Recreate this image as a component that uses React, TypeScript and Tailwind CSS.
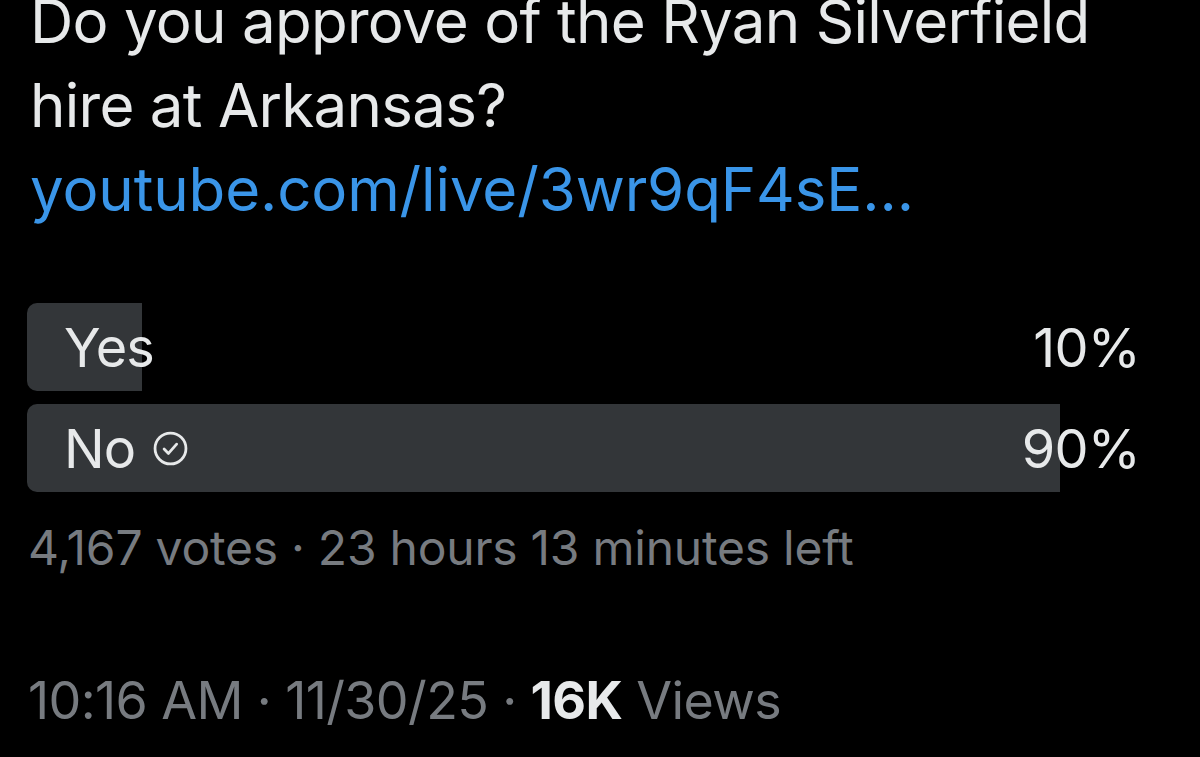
import React from 'react';

const options = [
  { label: 'Yes', percent: 10, chosen: false },
  { label: 'No', percent: 90, chosen: true },
];

function CheckCircle() {
  return (
    <svg width="35" height="35" viewBox="0 0 24 24" fill="none" className="shrink-0">
      <circle cx="12" cy="12" r="10.6" stroke="#e7e9ea" strokeWidth="1.9" />
      <path d="M7.6 12.4l3 3 5.6-6.4" stroke="#e7e9ea" strokeWidth="1.9" strokeLinecap="round" strokeLinejoin="round" />
    </svg>
  );
}

export default function App() {
  return (
    <div
      className="w-[1200px] h-[757px] overflow-hidden bg-black text-[#e7e9ea]"
      style={{ fontFamily: 'Inter, "Noto Sans", sans-serif' }}
    >
      <div className="pl-[30px] pr-[25px]">
        <div className="-mt-[21px] text-[60px] leading-[84px] tracking-[-0.012em]">
          <div>Do you approve of the Ryan Silverfield</div>
          <div>hire at Arkansas?</div>
          <div className="text-[#3a95e8] tracking-[-0.002em]">youtube.com/live/3wr9qF4sE…</div>
        </div>

        <div className="mt-[72px] -ml-[3px] flex flex-col gap-[13px]">
          {options.map(opt => (
            <div key={opt.label} className="relative h-[88px] flex items-center">
              <div
                className="absolute left-0 top-0 h-full bg-[#333639] rounded-l-[10px]"
                style={{ width: `${opt.percent}%` }}
              />
              <div className="relative flex-1 flex items-center justify-between pl-[37px] pr-[35px] text-[54px] tracking-[-0.015em]">
                <div className="flex items-center gap-[18px]">
                  <span>{opt.label}</span>
                  {opt.chosen && <CheckCircle />}
                </div>
                <span>{opt.percent}%</span>
              </div>
            </div>
          ))}
        </div>

        <div className="mt-[30px] -ml-[2px] text-[48px] leading-[52px] text-[#777b80] tracking-[-0.005em] whitespace-nowrap">
          4,167 votes · 23 hours 13 minutes left
        </div>

        <div className="mt-[96px] -ml-[2px] text-[52px] leading-[62px] text-[#777b80] tracking-[-0.012em] whitespace-nowrap">
          10:16 AM · 11/30/25 · <span className="font-bold text-[#e7e9ea]">16K</span> Views
        </div>
      </div>
    </div>
  );
}
